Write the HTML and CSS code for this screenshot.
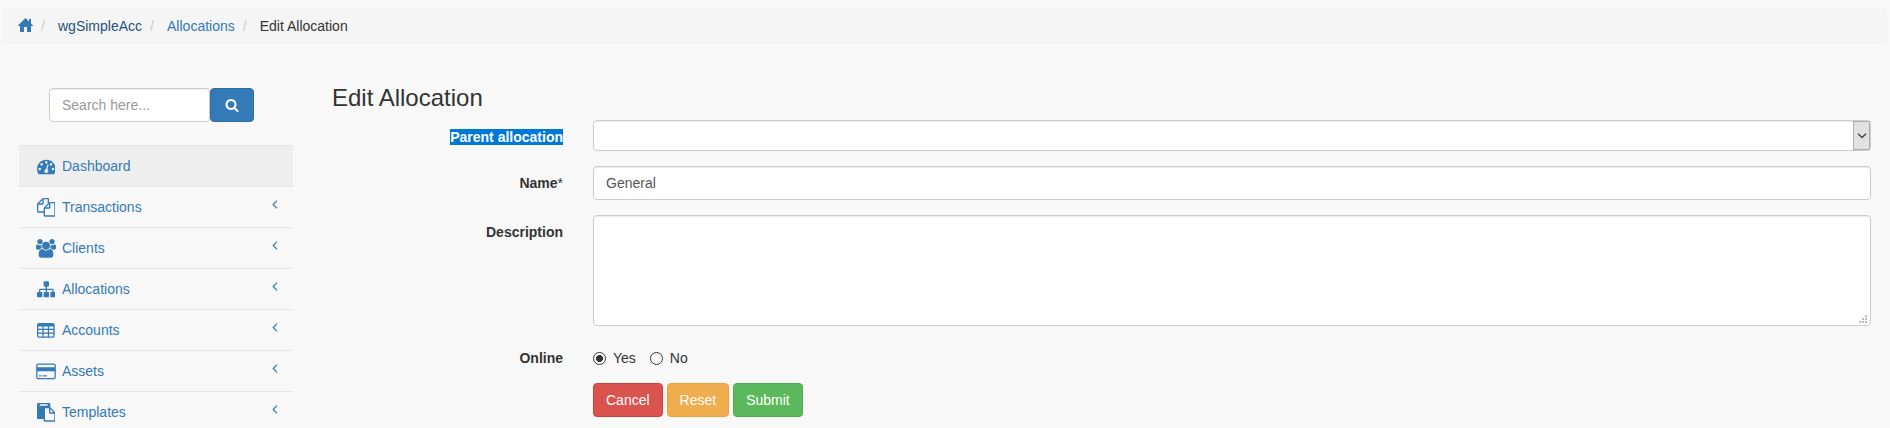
FILE: index.html
```html
<!DOCTYPE html>
<html lang="en">
<head>
<meta charset="utf-8">
<title>Edit Allocation</title>
<link rel="stylesheet" href="styles.css">
</head>
<body>
<nav>
  <ol class="breadcrumb">
    <li><a href="#" aria-label="Home"><svg class="home" viewBox="0 0 15 14"><path d="M7.5 0 11 3.4V1h2v4.4L15 7.5V8h-2v6H9V9H6v5H2V8H0v-.5z"/></svg></a></li>
    <li><a class="visited" href="#">wgSimpleAcc</a></li>
    <li><a href="#">Allocations</a></li>
    <li>Edit Allocation</li>
  </ol>
</nav>
<div class="page">
  <aside class="sidebar">
    <form class="search">
      <input class="control search-input" type="text" placeholder="Search here...">
      <button class="search-btn" type="button" aria-label="Search"><svg viewBox="0 0 1792 1792"><path d="M1216 832q0-185-131.5-316.5t-316.5-131.5-316.5 131.5-131.5 316.5 131.5 316.5 316.5 131.5 316.5-131.5 131.5-316.5zm512 832q0 52-38 90t-90 38q-54 0-90-38l-343-342q-179 124-399 124-143 0-273.5-55.5t-225-150-150-225-55.5-273.5 55.5-273.5 150-225 225-150 273.5-55.5 273.5 55.5 225 150 150 225 55.5 273.5q0 220-124 399l343 343q37 37 37 90z"/></svg></button>
    </form>
    <ul class="menu">
      <li class="active"><a href="#"><span class="icon"><svg viewBox="0 0 1792 1792"><path d="M384 1152q0-53-37.5-90.5t-90.5-37.5-90.5 37.5-37.5 90.5 37.5 90.5 90.5 37.5 90.5-37.5 37.5-90.5zm192-448q0-53-37.5-90.5t-90.5-37.5-90.5 37.5-37.5 90.5 37.5 90.5 90.5 37.5 90.5-37.5 37.5-90.5zm428 481l101-382q6-26-7.5-48.5t-38.5-29.5-48 6.5-30 39.5l-101 382q-60 5-107 43.5t-63 98.5q-20 77 20 146t117 89 146-20 89-117q16-60-6-117t-72-91zm660-33q0-53-37.5-90.5t-90.5-37.5-90.5 37.5-37.5 90.5 37.5 90.5 90.5 37.5 90.5-37.5 37.5-90.5zm-640-640q0-53-37.5-90.5t-90.5-37.5-90.5 37.5-37.5 90.5 37.5 90.5 90.5 37.5 90.5-37.5 37.5-90.5zm448 192q0-53-37.5-90.5t-90.5-37.5-90.5 37.5-37.5 90.5 37.5 90.5 90.5 37.5 90.5-37.5 37.5-90.5zm320 448q0 261-141 483-19 29-54 29h-1402q-35 0-54-29-141-221-141-483 0-182 71-348t191-286 286-191 348-71 348 71 286 191 191 286 71 348z"/></svg></span><span>Dashboard</span></a></li>
      <li><a href="#"><span class="icon"><svg viewBox="0 0 1792 1792"><path d="M1696 384q40 0 68 28t28 68v1216q0 40-28 68t-68 28h-960q-40 0-68-28t-28-68v-288h-544q-40 0-68-28t-28-68v-672q0-40 20-88t48-76l408-408q28-28 76-48t88-20h416q40 0 68 28t28 68v328q68-40 128-40h416zm-544 213l-299 299h299v-299zm-640-384l-299 299h299v-299zm196 647l316-316v-416h-384v416q0 40-28 68t-68 28h-416v640h512v-256q0-40 20-88t48-76zm956 804v-1152h-384v416q0 40-28 68t-68 28h-416v640h896z"/></svg></span><span>Transactions</span><svg class="angle" viewBox="0 0 6 9"><path d="M5 .7 1.2 4.5 5 8.3"/></svg></a></li>
      <li><a href="#"><span class="icon"><svg class="wide" viewBox="0 0 1920 1792"><path d="M593 896q-162 5-265 128h-134q-82 0-138-40.5t-56-118.5q0-353 124-353 6 0 43.5 21t97.5 42.5 119 21.5q67 0 133-23-5 37-5 66 0 139 81 256zm1071 637q0 120-73 189.5t-194 69.5h-874q-121 0-194-69.5t-73-189.5q0-53 3.5-103.5t14-109 26.5-108.5 43-97.5 62-81 85.5-53.5 111.5-20q10 0 43 21.5t73 48 107 48 135 21.5 135-21.5 107-48 73-48 43-21.5q61 0 111.5 20t85.5 53.5 62 81 43 97.5 26.5 108.5 14 109 3.5 103.5zm-1024-1277q0 106-75 181t-181 75-181-75-75-181 75-181 181-75 181 75 75 181zm704 384q0 159-112.5 271.5t-271.5 112.5-271.5-112.5-112.5-271.5 112.5-271.5 271.5-112.5 271.5 112.5 112.5 271.5zm576 225q0 78-56 118.5t-138 40.5h-134q-103-123-265-128 81-117 81-256 0-29-5-66 66 23 133 23 59 0 119-21.5t97.5-42.5 43.5-21q124 0 124 353zm-128-609q0 106-75 181t-181 75-181-75-75-181 75-181 181-75 181 75 75 181z"/></svg></span><span>Clients</span><svg class="angle" viewBox="0 0 6 9"><path d="M5 .7 1.2 4.5 5 8.3"/></svg></a></li>
      <li><a href="#"><span class="icon"><svg viewBox="0 0 1792 1792"><path d="M1792 1248v320q0 40-28 68t-68 28h-320q-40 0-68-28t-28-68v-320q0-40 28-68t68-28h96v-192h-512v192h96q40 0 68 28t28 68v320q0 40-28 68t-68 28h-320q-40 0-68-28t-28-68v-320q0-40 28-68t68-28h96v-192h-512v192h96q40 0 68 28t28 68v320q0 40-28 68t-68 28h-320q-40 0-68-28t-28-68v-320q0-40 28-68t68-28h96v-192q0-52 38-90t90-38h512v-192h-96q-40 0-68-28t-28-68v-320q0-40 28-68t68-28h320q40 0 68 28t28 68v320q0 40-28 68t-68 28h-96v192h512q52 0 90 38t38 90v192h96q40 0 68 28t28 68z"/></svg></span><span>Allocations</span><svg class="angle" viewBox="0 0 6 9"><path d="M5 .7 1.2 4.5 5 8.3"/></svg></a></li>
      <li><a href="#"><span class="icon"><svg viewBox="0 0 19 19"><path fill-rule="evenodd" d="M2 2h14q2 0 2 2v11q0 2-2 2H2q-2 0-2-2V4q0-2 2-2zM1.300 5.500v2.500h4.200V5.500zm5.500 0v2.500h4.200V5.500zm5.500 0v2.500h4.300V5.500zM1.300 9.200v2.600h4.200V9.200zm5.500 0v2.600h4.200V9.200zm5.500 0v2.600h4.300V9.200zM1.300 13v2q0 .7.7.7h3.500V13zm5.500 0v2.700h4.200V13zm5.500 0v2.700h3.600q.7 0 .7-.7v-2z"/></svg></span><span>Accounts</span><svg class="angle" viewBox="0 0 6 9"><path d="M5 .7 1.2 4.5 5 8.3"/></svg></a></li>
      <li><a href="#"><span class="icon"><svg class="wide" viewBox="0 0 20 19"><path fill-rule="evenodd" d="M2 1.500h16q2 0 2 2v12q0 2-2 2H2q-2 0-2-2v-12q0-2 2-2zM2 2.800q-.7 0-.7.7v1.800h17.400V3.500q0-.7-.7-.7zM1.300 9.300v6.200q0 .7.700.7h16q.7 0 .7-.7V9.300zM2.700 13.500h2.600v1.300H2.700zm4 0h4v1.300h-4z"/></svg></span><span>Assets</span><svg class="angle" viewBox="0 0 6 9"><path d="M5 .7 1.2 4.5 5 8.3"/></svg></a></li>
      <li><a href="#"><span class="icon"><svg viewBox="0 0 1792 1792"><path d="M768 1664h896v-640h-416q-40 0-68-28t-28-68v-416h-384v1152zm256-1440v-64q0-13-9.500-22.500t-22.500-9.500h-704q-13 0-22.500 9.500t-9.500 22.500v64q0 13 9.500 22.500t22.500 9.500h704q13 0 22.500-9.500t9.500-22.500zm256 672h299l-299-299v299zm512 128v672q0 40-28 68t-68 28h-960q-40 0-68-28t-28-68v-160h-544q-40 0-68-28t-28-68v-1344q0-40 28-68t68-28h1088q40 0 68 28t28 68v328q21 13 36 28l408 408q28 28 48 76t20 88z"/></svg></span><span>Templates</span><svg class="angle" viewBox="0 0 6 9"><path d="M5 .7 1.2 4.5 5 8.3"/></svg></a></li>
    </ul>
  </aside>
  <main class="content">
    <h3>Edit Allocation</h3>
    <form class="form">
      <div class="label"><span class="selected">Parent allocation</span></div>
      <div class="control select" role="combobox" aria-label="Parent allocation" tabindex="0"><span class="arrow"><svg viewBox="0 0 10 6"><path d="M1 .8 5 4.600 9 .8"/></svg></span></div>
      <label class="label" for="name">Name<span class="star">*</span></label>
      <input class="control" id="name" type="text" value="General">
      <label class="label" for="desc">Description</label>
      <div class="area"><textarea class="control" id="desc"></textarea><svg class="grip" viewBox="0 0 8 8"><path d="M6 0h2v2H6zM3 3h2v2H3zM6 3h2v2H6zM0 6h2v2H0zM3 6h2v2H3zM6 6h2v2H6z"/></svg></div>
      <div class="label">Online</div>
      <div class="radios">
        <label><input type="radio" name="online" checked>Yes</label>
        <label><input type="radio" name="online">No</label>
      </div>
      <div class="buttons">
        <button class="btn danger" type="button">Cancel</button>
        <button class="btn warning" type="button">Reset</button>
        <button class="btn success" type="button">Submit</button>
      </div>
    </form>
  </main>
</div>
</body>
</html>
```

FILE: styles.css
```css
* { box-sizing: border-box; }
html { height: 100%; overflow: hidden; }
body {
  margin: 0;
  height: 100%;
  overflow: hidden;
  padding: 8px 3px 0;
  background: #f8f8f8;
  color: #333;
  font: 14px/20px "Liberation Sans", Arial, sans-serif;
}
a { color: #337ab7; text-decoration: none; }
input, button, textarea { font: inherit; margin: 0; }
svg { display: block; fill: currentColor; }

.breadcrumb {
  display: flex;
  margin: 0;
  padding: 8px 15px;
  list-style: none;
  background: #f5f5f5;
  border-radius: 4px;
}
.breadcrumb li { display: flex; }
.breadcrumb li + li::before {
  content: "/";
  width: 17px;
  margin-left: 8px;
  color: #ccc;
}
.breadcrumb .visited { color: #23527c; }
.home { width: 15px; height: 14px; margin-top: 2px; }

.page { display: flex; padding: 41px 16px 0; }
.sidebar { width: 274px; flex: none; padding-top: 3px; }
.search { display: flex; padding-left: 30px; }
.control {
  display: block;
  width: 100%;
  height: 34px;
  padding: 6px 12px;
  color: #555;
  background: #fff;
  border: 1px solid #ccc;
  border-radius: 4px;
  box-shadow: inset 0 1px 1px rgba(0, 0, 0, .075);
}
.search-input { width: 161px; }
.search-input::placeholder { color: #999; opacity: 1; }
.search-btn {
  display: flex;
  align-items: center;
  justify-content: center;
  width: 44px;
  height: 34px;
  padding: 0;
  color: #fff;
  background: #337ab7;
  border: 1px solid #2e6da4;
  border-radius: 4px;
}
.search-btn svg { width: 14px; height: 14px; }

.menu {
  margin: 23px 0 0;
  padding: 0;
  list-style: none;
  border-top: 1px solid #e7e7e7;
}
.menu li { border-bottom: 1px solid #e7e7e7; }
.menu .active { background: #eee; }
.menu a { display: flex; height: 40px; padding: 10px 15px; }
.icon {
  display: flex;
  justify-content: center;
  width: 24px;
  margin-right: 4px;
  padding-top: 1px;
}
.icon svg { flex: none; width: 18.67px; height: 18.67px; }
.icon .wide { width: 20px; }
.menu .angle {
  width: 6px;
  height: 9px;
  margin: 3px 0 0 auto;
  fill: none;
  stroke: currentColor;
  stroke-width: 1.2;
}

.content { flex: 1; padding-left: 39px; }
h3 { margin: 0 0 9px; font-size: 24px; line-height: 26px; font-weight: 500; }
.form {
  display: grid;
  grid-template-columns: 231px 1278px;
  column-gap: 30px;
  row-gap: 15px;
}
.label { padding-top: 7px; height: 27px; font-weight: 700; text-align: right; }
.selected { display: inline-block; height: 16px; line-height: 16px; margin-top: 2px; color: #fff; background: #0078d7; vertical-align: top; }
.star { font-weight: 400; }
.select { display: flex; justify-content: flex-end; height: 31px; padding: 0; }
.arrow {
  display: flex;
  align-items: center;
  justify-content: center;
  width: 17px;
  background: #e1e1e1;
  border: 1px solid #adadad;
}
.arrow svg { width: 10px; height: 6px; fill: none; stroke: #444; stroke-width: 1.4; }
.area { position: relative; height: 111px; }
.area textarea { height: 111px; resize: none; }
.grip { position: absolute; right: 4px; bottom: 3px; width: 8px; height: 8px; fill: #b9b9b9; }
.radios { display: flex; gap: 14px; height: 27px; padding-top: 7px; }
.radios label { display: flex; gap: 7px; }
.radios input {
  appearance: none;
  width: 13px;
  height: 13px;
  margin-top: 4px;
  border: 1px solid #333;
  border-radius: 50%;
  background: #fff;
}
.radios input:checked { background: radial-gradient(circle, #333 3.2px, #fff 3.8px); }
.buttons { grid-column: 2; display: flex; gap: 4px; }
.btn { height: 34px; padding: 6px 12px; color: #fff; border: 1px solid; border-radius: 4px; }
.danger { background: #d9534f; border-color: #d43f3a; }
.warning { background: #f0ad4e; border-color: #eea236; }
.success { background: #5cb85c; border-color: #4cae4c; }
```
